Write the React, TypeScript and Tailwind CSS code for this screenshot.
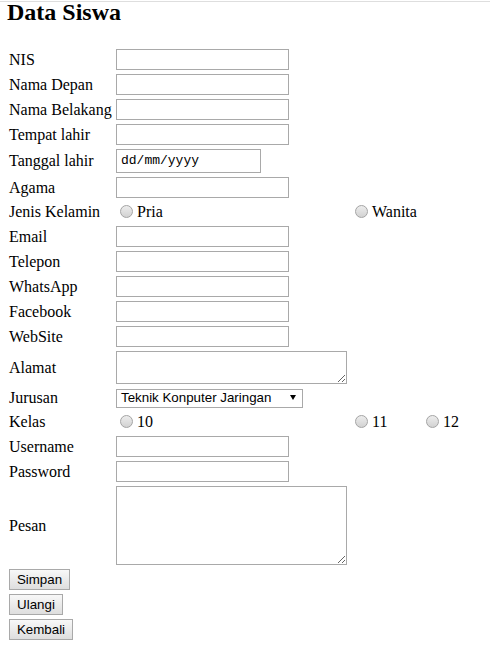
import type { ReactNode } from "react";

const inputCls =
  "h-[21px] w-[173px] border border-[#a9a9a9] bg-white px-[2px] font-['Liberation_Sans',sans-serif] text-[13.33px] text-black outline-none";
const areaCls =
  "w-[231px] border border-[#a9a9a9] bg-white px-[2px] font-['Liberation_Sans',sans-serif] text-[13.33px] text-black outline-none";
const btnCls =
  "h-[21px] border border-[#a9a9a9] bg-gradient-to-b from-[#f8f8f8] to-[#dedede] font-['Liberation_Sans',sans-serif] text-[13.33px] leading-none text-black";

function Row({ label, children, top }: { label: string; children: ReactNode; top?: boolean }) {
  return (
    <div className={`flex ${top ? "h-[20px] items-start" : "items-center"}`}>
      <span className="w-[107px] shrink-0 whitespace-nowrap leading-[20px]">{label}</span>
      {children}
    </div>
  );
}

function Radio({ label }: { label: string }) {
  return (
    <span className="flex items-start">
      <span className="mx-[4px] mt-[3px] h-[13px] w-[13px] shrink-0 rounded-full border border-[#a4a4a4] bg-gradient-to-b from-[#ededed] to-[#d2d2d2]" />
      <span className="leading-[20px]">{label}</span>
    </span>
  );
}

export default function App() {
  return (
    <div className="min-h-screen bg-white pt-px font-['Liberation_Serif',serif] text-black">
      <div className="border-t border-[#dedede]">
        <h2 className="pl-[7px] text-[24px] font-bold leading-[20px]">Data Siswa</h2>

        <form className="mt-[27px] flex flex-col gap-[4px] pl-[9px] text-[16px]">
          <Row label="NIS"><input className={inputCls} /></Row>
          <Row label="Nama Depan"><input className={inputCls} /></Row>
          <Row label="Nama Belakang"><input className={inputCls} /></Row>
          <Row label="Tempat lahir"><input className={inputCls} /></Row>
          <Row label="Tanggal lahir">
            <div className="flex h-[24px] w-[145px] items-center border border-[#a9a9a9] bg-white pl-[4px] font-['Liberation_Mono',monospace] text-[13px] text-black">
              dd/mm/yyyy
            </div>
          </Row>
          <Row label="Agama"><input className={inputCls} /></Row>
          <Row label="Jenis Kelamin" top>
            <div className="w-[235px]"><Radio label="Pria" /></div>
            <Radio label="Wanita" />
          </Row>
          <Row label="Email"><input className={inputCls} /></Row>
          <Row label="Telepon"><input className={inputCls} /></Row>
          <Row label="WhatsApp"><input className={inputCls} /></Row>
          <Row label="Facebook"><input className={inputCls} /></Row>
          <Row label="WebSite"><input className={inputCls} /></Row>
          <Row label="Alamat"><textarea className={`${areaCls} h-[33px]`} /></Row>
          <Row label="Jurusan" top>
            <div className="relative mt-px flex h-[19px] w-[187px] items-center border border-[#a9a9a9] bg-white pl-[4px] font-['Liberation_Sans',sans-serif] text-[13.33px] leading-[15px] text-black">
              <span className="-mt-[2px]">Teknik Konputer Jaringan</span>
              <svg className="pointer-events-none absolute right-[6px] top-[5px]" width="6" height="5" viewBox="0 0 6 5">
                <path d="M0 0H6L3 5Z" fill="#000" />
              </svg>
            </div>
          </Row>
          <Row label="Kelas" top>
            <div className="w-[235px]"><Radio label="10" /></div>
            <div className="w-[71px]"><Radio label="11" /></div>
            <Radio label="12" />
          </Row>
          <Row label="Username"><input className={inputCls} /></Row>
          <Row label="Password"><input type="password" className={inputCls} /></Row>
          <Row label="Pesan"><textarea className={`${areaCls} h-[79px]`} /></Row>

          <button type="button" className={`${btnCls} w-[61px]`}>Simpan</button>
          <button type="button" className={`${btnCls} w-[54px]`}>Ulangi</button>
          <button type="button" className={`${btnCls} w-[64px]`}>Kembali</button>
        </form>
      </div>
    </div>
  );
}
